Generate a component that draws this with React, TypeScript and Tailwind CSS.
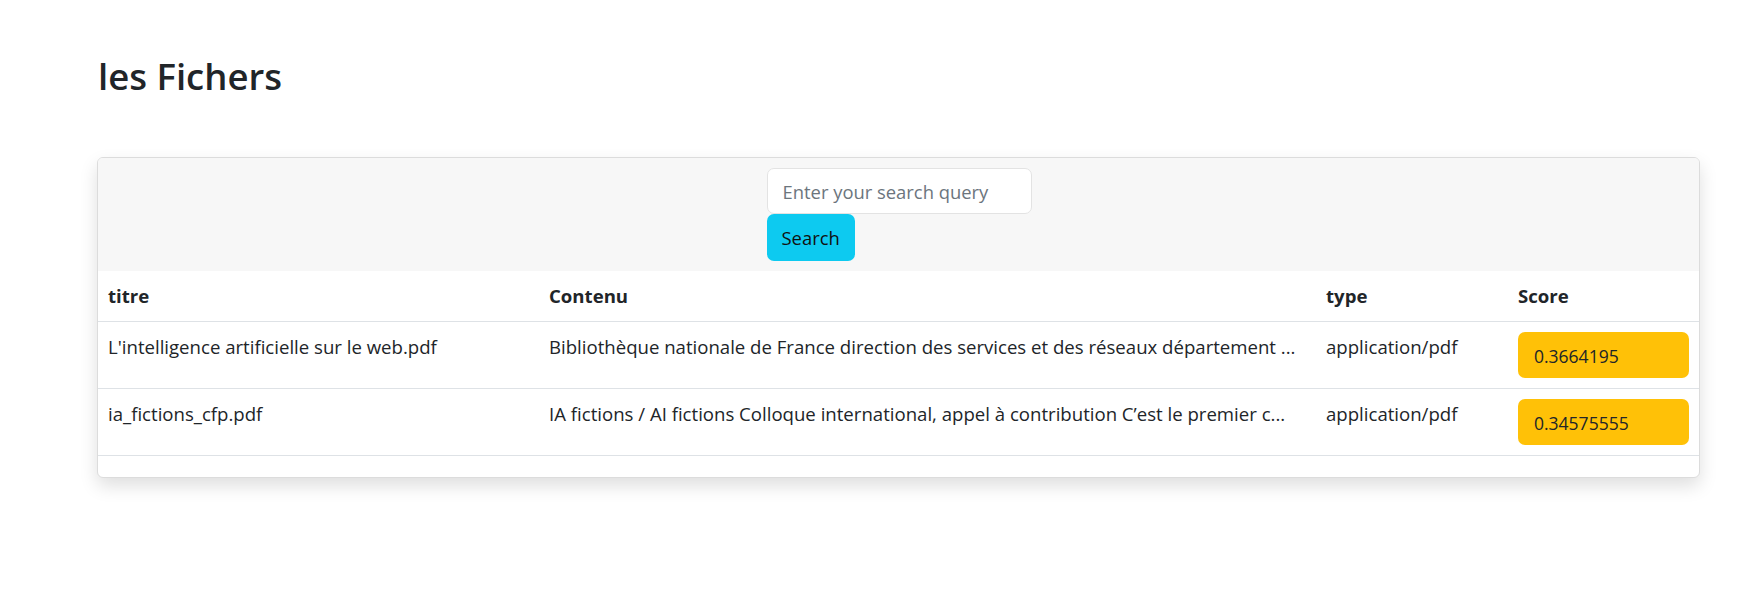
import { useState } from "react";

export default function App() {
  const [query, setQuery] = useState("");

  // Results from the search
  const fichiers = [
    {
      titre: "L'intelligence artificielle sur le web.pdf",
      contenu:
        "Bibliothèque nationale de France direction des services et des réseaux département ...",
      type: "application/pdf",
      score: "0.3664195",
    },
    {
      titre: "ia_fictions_cfp.pdf",
      contenu:
        "IA fictions / AI fictions Colloque international, appel à contribution C’est le premier c...",
      type: "application/pdf",
      score: "0.34575555",
    },
  ];

  return (
    <div className="min-h-[599px] bg-white font-['Open_Sans',sans-serif] text-[#212529]">
      <div className="pl-[97px] pt-[52px]">
        {/* Title */}
        <h1 className="text-[36.5px] leading-[48px] font-semibold pl-[1px]">les Fichers</h1>

        {/* Card */}
        <div className="mt-[57px] w-[1603px] border border-[#dcdcdc] rounded-[6px] shadow-[0_8px_18px_rgba(0,0,0,0.13)] overflow-hidden bg-white pb-[21px]">
          {/* Search header */}
          <div className="bg-[#f7f7f7] flex justify-center pt-[10px] pb-[10px]">
            <div className="flex flex-col items-start pl-[1px]">
              <input
                type="text"
                placeholder="Enter your search query"
                value={query}
                onChange={(e) => setQuery(e.target.value)}
                className="w-[265px] h-[46px] px-[15px] bg-white border border-[#e3e3e3] rounded-[7px] text-[18.4px] outline-none placeholder:text-[#6c757d]"
              />
              <button className="h-[47px] px-[15px] bg-[#0dcaf0] text-[#111] text-[18.4px] rounded-[7px]">
                Search
              </button>
            </div>
          </div>

          {/* Table */}
          <table className="w-full border-collapse text-[18.6px] text-left">
            <thead>
              <tr className="border-b border-[#dee2e6]">
                <th className="w-[441px] px-[10px] py-[10px] font-bold leading-[30px]">titre</th>
                <th className="w-[777px] px-[10px] py-[10px] font-bold leading-[30px]">Contenu</th>
                <th className="w-[192px] px-[10px] py-[10px] font-bold leading-[30px]">type</th>
                <th className="px-[10px] py-[10px] font-bold leading-[30px]">Score</th>
              </tr>
            </thead>
            <tbody>
              {fichiers.map((f, idx) => (
                <tr key={idx} className="border-b border-[#dee2e6] align-top">
                  <td className="px-[10px] py-[10px] leading-[30px]">{f.titre}</td>
                  <td className="px-[10px] py-[10px] leading-[30px] whitespace-nowrap">{f.contenu}</td>
                  <td className="px-[10px] py-[10px] leading-[30px]">{f.type}</td>
                  <td className="px-[10px] py-[10px]">
                    <div className="h-[46px] w-full flex items-center pl-[16px] pt-[3px] bg-[#ffc107] rounded-[7px] text-[17.5px]">
                      {f.score}
                    </div>
                  </td>
                </tr>
              ))}
            </tbody>
          </table>
        </div>
      </div>
    </div>
  );
}
